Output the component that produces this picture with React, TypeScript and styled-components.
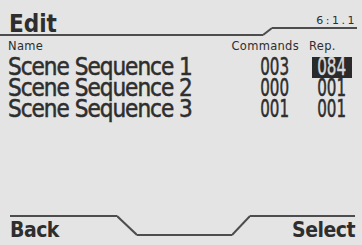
import { createGlobalStyle, styled } from 'styled-components';

const INK = '#2e2e2e';
const LINE = '#4d4d4d';
const BG = '#e4e4e4';

const GlobalStyle = createGlobalStyle`
  html, body {
    margin: 0;
    padding: 0;
    background: ${BG};
  }
`;

interface SequenceRow {
  name: string;
  commands: string;
  repeat: string;
  isActive?: boolean;
}

const rows: SequenceRow[] = [
  { name: 'Scene Sequence 1', commands: '003', repeat: '084', isActive: true },
  { name: 'Scene Sequence 2', commands: '000', repeat: '001' },
  { name: 'Scene Sequence 3', commands: '001', repeat: '001' },
];

export default function App() {
  return (
    <>
      <GlobalStyle />
      <S.Screen>
        <S.Header>
          <S.TitleCell>Edit</S.TitleCell>
          <S.Notch width="9" height="36" viewBox="0 0 9 36">
            <path d="M0 35 L9 28" stroke={LINE} strokeWidth="2" fill="none" />
          </S.Notch>
          <S.PageCell>6:1.1</S.PageCell>
        </S.Header>

        <S.Table>
          <S.HeadCell>Name</S.HeadCell>
          <S.HeadCell $align="right">Commands</S.HeadCell>
          <S.HeadCell $pad={10}>Rep.</S.HeadCell>

          {rows.map((row) => (
            <S.Row key={row.name}>
              <S.NameCell>{row.name}</S.NameCell>
              <S.CmdCell>
                <S.Digits>{row.commands}</S.Digits>
              </S.CmdCell>
              <S.RepCell>
                <S.RepBox $isActive={!!row.isActive}>
                  <S.Digits>{row.repeat}</S.Digits>
                </S.RepBox>
              </S.RepCell>
            </S.Row>
          ))}
        </S.Table>

        <S.Footer>
          <S.SoftKey>Back</S.SoftKey>
          <S.Notch width="20" height="30" viewBox="0 0 20 30">
            <path d="M0 1 L20 20" stroke={LINE} strokeWidth="2" fill="none" />
          </S.Notch>
          <S.FooterGap />
          <S.Notch width="18" height="30" viewBox="0 0 18 30">
            <path d="M0 20 L18 1" stroke={LINE} strokeWidth="2" fill="none" />
          </S.Notch>
          <S.SoftKey $align="right">Select</S.SoftKey>
        </S.Footer>
      </S.Screen>
    </>
  );
}

const S = {
  Screen: styled.div`
    display: flex;
    flex-direction: column;

    width: 362px;
    height: 245px;
    overflow: hidden;

    background: ${BG};
    color: ${INK};
    font-family: 'DejaVu Sans Condensed', 'DejaVu Sans', sans-serif;
  `,
  Header: styled.div`
    display: flex;
    align-items: flex-start;
    height: 36px;
  `,
  TitleCell: styled.div`
    box-sizing: border-box;
    width: 263px;
    height: 36px;
    padding: 12px 0 0 9px;

    border-bottom: 2px solid ${LINE};

    font-size: 24px;
    font-weight: 700;
    line-height: 24px;
  `,
  Notch: styled.svg`
    display: block;
    flex-shrink: 0;
  `,
  PageCell: styled.div`
    box-sizing: border-box;
    flex: 1;
    height: 29px;
    margin-right: 5px;
    padding-top: 15px;

    border-bottom: 2px solid ${LINE};

    font-family: 'DejaVu Sans', sans-serif;
    font-size: 11px;
    line-height: 11px;
    letter-spacing: 2.5px;
    text-align: right;
  `,
  Table: styled.div`
    display: grid;
    grid-template-columns: 1fr 70px 58px;
    padding: 4px 5px 0 8px;
  `,
  HeadCell: styled.div<{ $align?: 'left' | 'right'; $pad?: number }>`
    height: 13px;
    margin-bottom: 4px;
    padding-left: ${({ $pad }) => $pad ?? 0}px;

    font-family: 'DejaVu Sans', sans-serif;
    font-size: 11.5px;
    line-height: 13px;
    text-align: ${({ $align }) => $align ?? 'left'};
    letter-spacing: 0.3px;
  `,
  Row: styled.div`
    display: contents;
  `,
  NameCell: styled.div`
    height: 21px;

    font-size: 24px;
    line-height: 21px;
    letter-spacing: -1px;
    white-space: nowrap;
    -webkit-text-stroke: 0.5px ${INK};
  `,
  CmdCell: styled.div`
    height: 21px;
    padding-right: 4px;
    text-align: right;
  `,
  RepCell: styled.div`
    height: 21px;
    padding-left: 13px;
  `,
  RepBox: styled.div<{ $isActive: boolean }>`
    box-sizing: border-box;
    display: flex;
    justify-content: center;
    width: 40px;
    height: 21px;

    background: ${({ $isActive }) => ($isActive ? '#2a2a2a' : 'transparent')};
    color: ${({ $isActive }) => ($isActive ? '#d8d8d8' : INK)};
  `,
  Digits: styled.span`
    display: inline-block;

    font-size: 24px;
    line-height: 21px;
    transform: scaleX(0.7);
    transform-origin: center;
    -webkit-text-stroke: 0.5px currentColor;
  `,
  Footer: styled.div`
    display: flex;
    align-items: flex-start;
    height: 30px;
    margin-top: auto;
    padding-left: 10px;
    padding-right: 7px;
  `,
  SoftKey: styled.div<{ $align?: 'left' | 'right' }>`
    box-sizing: border-box;
    width: ${({ $align }) => ($align === 'right' ? 105 : 107)}px;
    height: 30px;
    padding-top: 3px;

    border-top: 2px solid ${LINE};

    font-size: 21px;
    font-weight: 700;
    line-height: 21px;
    letter-spacing: -0.5px;
    text-align: ${({ $align }) => $align ?? 'left'};
  `,
  FooterGap: styled.div`
    box-sizing: border-box;
    flex: 1;
    height: 21px;
    border-bottom: 2px solid ${LINE};
  `,
};
